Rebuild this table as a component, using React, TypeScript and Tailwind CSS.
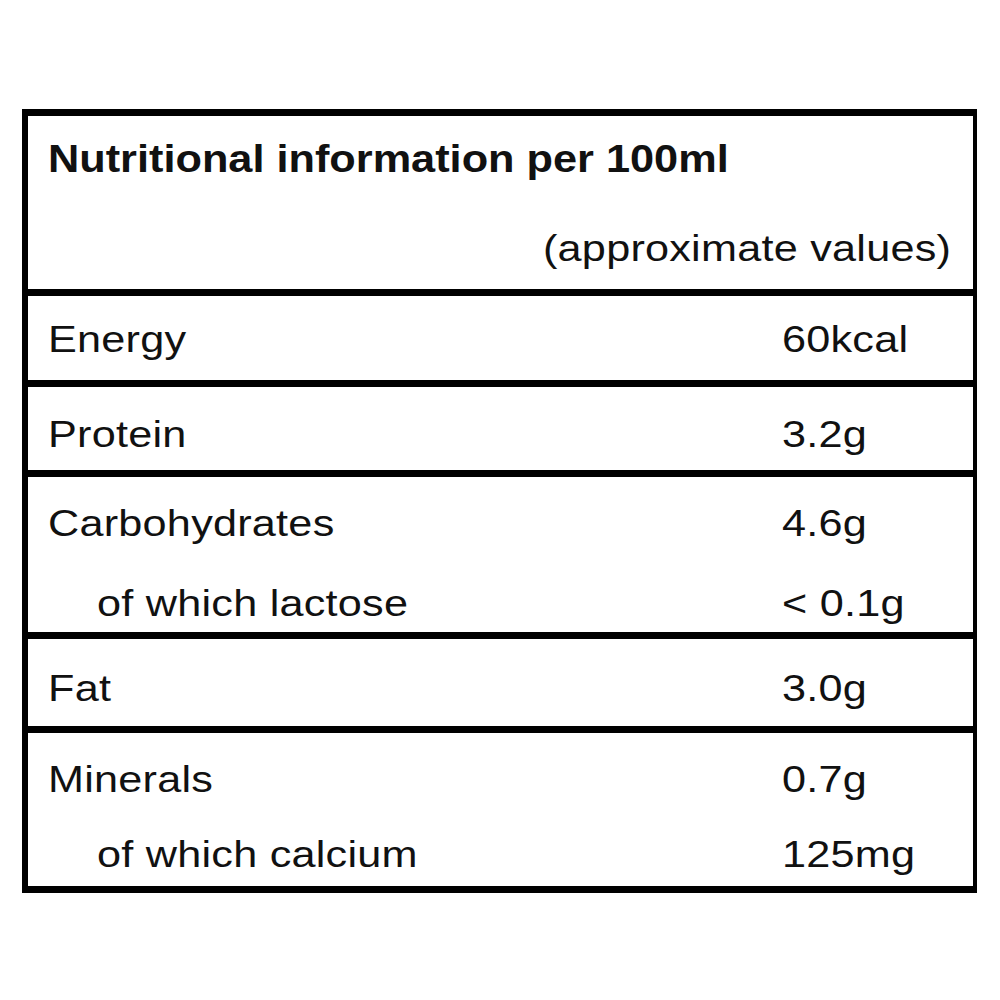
// Heights are border-box, so every row but the last carries its 7px rule inside.
const rows: { h: string; pt: string; gap: string; lines: { label: string; value: string; indent?: boolean }[] }[] = [
    { h: 'h-[91px]', pt: 'pt-[24px]', gap: 'gap-0', lines: [{ label: 'Energy', value: '60kcal' }] },
    { h: 'h-[90px]', pt: 'pt-[28px]', gap: 'gap-0', lines: [{ label: 'Protein', value: '3.2g' }] },
    {
        h: 'h-[162px]', pt: 'pt-[27px]', gap: 'gap-[40px]', lines: [
            { label: 'Carbohydrates', value: '4.6g' },
            { label: 'of which lactose', value: '< 0.1g', indent: true },
        ],
    },
    { h: 'h-[94px]', pt: 'pt-[30px]', gap: 'gap-0', lines: [{ label: 'Fat', value: '3.0g' }] },
    {
        h: 'h-[153px]', pt: 'pt-[27px]', gap: 'gap-[35px]', lines: [
            { label: 'Minerals', value: '0.7g' },
            { label: 'of which calcium', value: '125mg', indent: true },
        ],
    },
];

function Wide({ children, right }: { children: string; right?: boolean }) {
    return (
        <span className={`inline-block whitespace-pre scale-x-[1.2] tracking-[0.2px] ${right ? 'origin-right' : 'origin-left'}`}>
            {children}
        </span>
    );
}

export default function App() {
    return (
        <div className="h-[1000px] w-[1000px] bg-white pt-[109px] pl-[22px] text-[#111] font-['Liberation_Sans',Arial,sans-serif]">
            <div className="w-[955px] border-t-[7px] border-r-[4px] border-b-[7px] border-l-[6px] border-black">
                <div className="flex h-[180px] flex-col border-b-[7px] border-black pt-[21px] pl-[20px] pr-[22px]">
                    <div className="text-[39px] font-bold leading-[44px]">
                        <span className="inline-block origin-left scale-x-[1.11] whitespace-pre">Nutritional information per 100ml</span>
                    </div>
                    <div className="mt-[48px] text-right text-[36px] leading-[40px]">
                        <Wide right>(approximate values)</Wide>
                    </div>
                </div>

                {rows.map((r, i) => (
                    <div
                        key={i}
                        className={`flex flex-col ${r.h} ${r.pt} ${r.gap} pl-[20px] ${i < rows.length - 1 ? 'border-b-[7px] border-black' : ''}`}
                    >
                        {r.lines.map(l => (
                            <div key={l.label} className="flex text-[36px] leading-[40px]">
                                <div className={`w-[734px] ${l.indent ? 'pl-[49px]' : ''}`}>
                                    <Wide>{l.label}</Wide>
                                </div>
                                <div>
                                    <Wide>{l.value}</Wide>
                                </div>
                            </div>
                        ))}
                    </div>
                ))}
            </div>
        </div>
    );
}
